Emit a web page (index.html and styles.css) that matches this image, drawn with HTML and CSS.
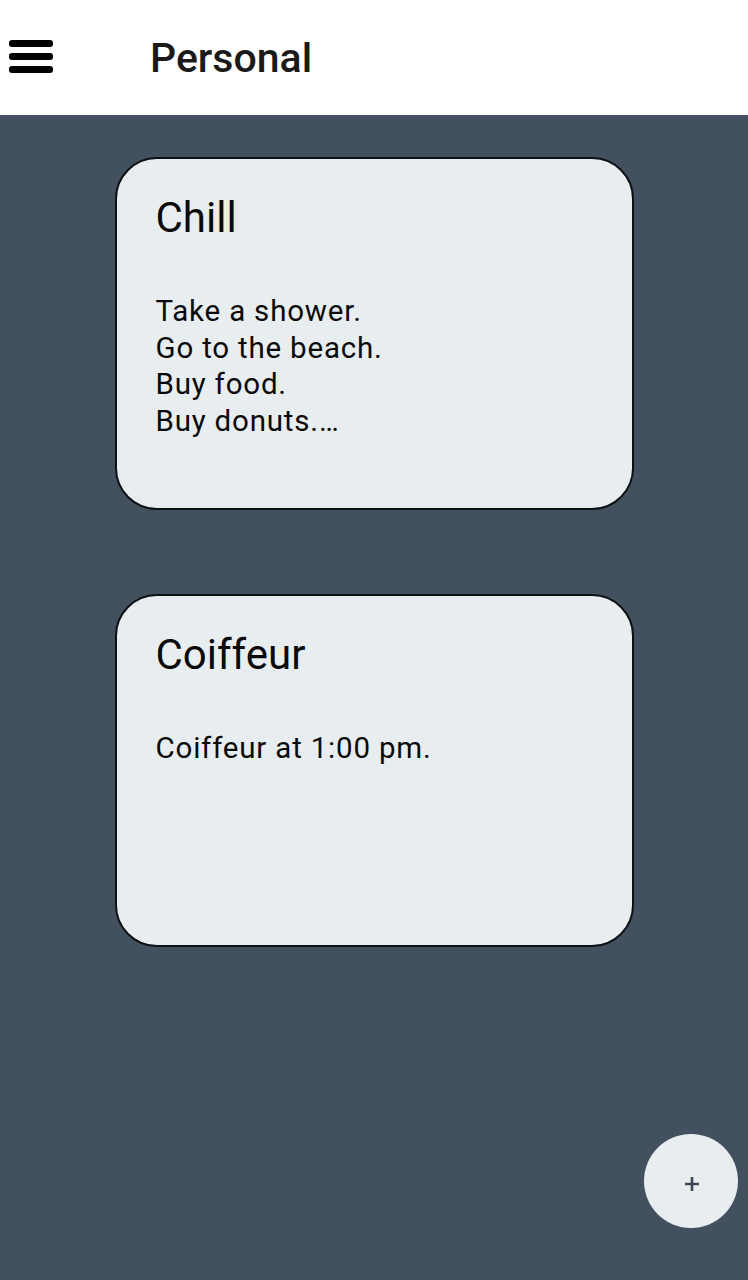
FILE: index.html
```html
<!DOCTYPE html>
<html>
<head>
<meta charset="utf-8">
<link rel="stylesheet" href="styles.css">
</head>
<body>
<header class="topbar">
  <div class="menu" aria-label="Menu">
    <span class="bar"></span><span class="bar"></span><span class="bar"></span>
  </div>
  <h1 class="title">Personal</h1>
</header>
<main class="board">
  <section class="card">
    <h2 class="card-title">Chill</h2>
    <p class="card-body">Take a shower.<br>Go to the beach.<br>Buy food.<br>Buy donuts.…</p>
  </section>
  <section class="card">
    <h2 class="card-title">Coiffeur</h2>
    <p class="card-body">Coiffeur at 1:00 pm.</p>
  </section>
</main>
<button class="fab" aria-label="Add">
  <svg class="plus" width="16" height="16" viewBox="0 0 16 16"><path d="M8 1v14M1 8h14" stroke="#3a4653" stroke-width="2.6" fill="none"/></svg>
</button>
</body>
</html>
```
FILE: styles.css
```css
* { box-sizing: border-box; }
html, body { margin: 0; padding: 0; }
body {
  width: 748px;
  height: 1280px;
  background: #435060;
  font-family: Roboto, "Noto Sans", sans-serif;
  overflow: hidden;
  position: relative;
}
.topbar {
  height: 115px;
  background: #ffffff;
  display: flex;
  align-items: center;
  padding-left: 9px;
}
.menu {
  width: 44px;
  display: flex;
  flex-direction: column;
  gap: 6px;
  margin-top: -3px;
}
.bar {
  display: block;
  height: 7px;
  border-radius: 3px;
  background: #000;
}
.title {
  margin: 0 0 0 97px;
  font-size: 41px;
  font-weight: 500;
  color: #1a1a1a;
}
.board {
  display: flex;
  flex-direction: column;
  align-items: center;
  gap: 84px;
  padding-top: 42px;
}
.card {
  width: 519px;
  height: 353px;
  background: #e8edf0;
  border: 2px solid #0e1114;
  border-radius: 42px;
  padding: 33px 39px;
  color: #0a0a0a;
}
.card-title {
  margin: 0;
  font-size: 42px;
  font-weight: 400;
  line-height: 52px;
}
.card-body {
  margin: 49px 0 0;
  font-size: 29.5px;
  line-height: 36.7px;
  letter-spacing: 0.8px;
}
.fab {
  position: absolute;
  left: 644px;
  top: 1134px;
  width: 94px;
  height: 94px;
  border-radius: 50%;
  border: none;
  background: #e8edf0;
  padding: 0;
  display: flex;
  align-items: center;
  justify-content: center;
}
.plus {
  display: block;
  margin: 6px 0 0 1px;
}
```
